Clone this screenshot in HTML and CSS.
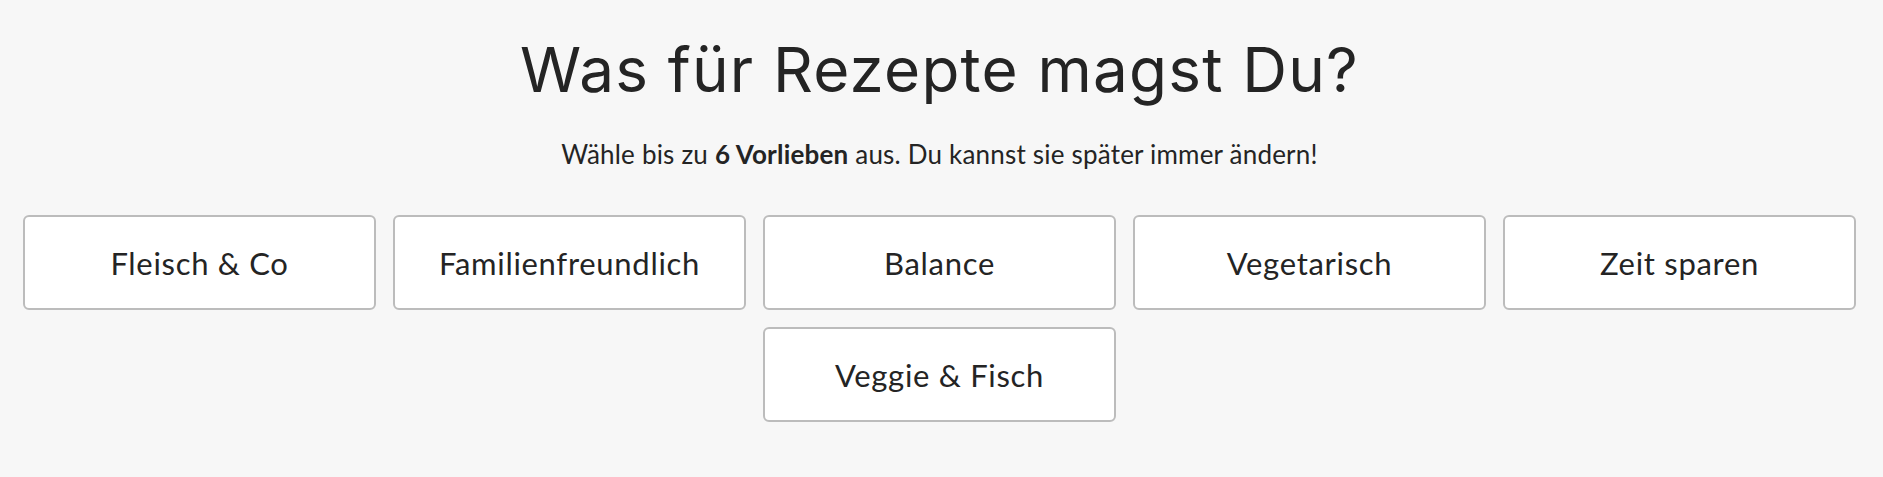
FILE: index.html
```html
<!DOCTYPE html>
<html lang="de">
<head>
    <meta charset="UTF-8">
    <meta name="viewport" content="width=device-width, initial-scale=1.0">
    <title>Vorlieben</title>
    <link rel="stylesheet" href="styles.css">
</head>
<body>
    <div class="preferences">
        <h1 class="title">Was für Rezepte magst Du?</h1>
        <p class="subtitle">Wähle bis zu <strong>6 Vorlieben</strong> aus. Du kannst sie später immer ändern!</p>
        <div class="options">
            <button class="option">Fleisch &amp; Co</button>
            <button class="option">Familienfreundlich</button>
            <button class="option">Balance</button>
            <button class="option">Vegetarisch</button>
            <button class="option">Zeit sparen</button>
            <button class="option">Veggie &amp; Fisch</button>
        </div>
    </div>
</body>
</html>
```

FILE: styles.css
```css
body {
    margin: 0;
    background-color: #f7f7f7;
    color: #242424;
    font-family: "Lato", "Liberation Sans", sans-serif;
}
.preferences {
    display: flex;
    flex-direction: column;
    align-items: center;
    padding: 39px 27px 0 23px;
}
.title {
    margin: 0;
    font-family: "Inter", "Liberation Sans", sans-serif;
    font-weight: 400;
    font-size: 62px;
    line-height: 62px;
    letter-spacing: 1.2px;
}
.subtitle {
    margin: 37px 0 0;
    font-size: 26px;
    line-height: 32px;
    letter-spacing: 0.2px;
}
.subtitle strong {
    font-weight: 700;
}
.options {
    display: flex;
    flex-wrap: wrap;
    justify-content: center;
    gap: 17px;
    margin-top: 45px;
    width: 100%;
}
.option {
    width: 353px;
    height: 95px;
    background-color: #fff;
    border: 2px solid #bcbcbc;
    border-radius: 6px;
    font-family: "Lato", "Liberation Sans", sans-serif;
    font-size: 31px;
    letter-spacing: 0.7px;
    color: #242424;
    cursor: pointer;
}
```
